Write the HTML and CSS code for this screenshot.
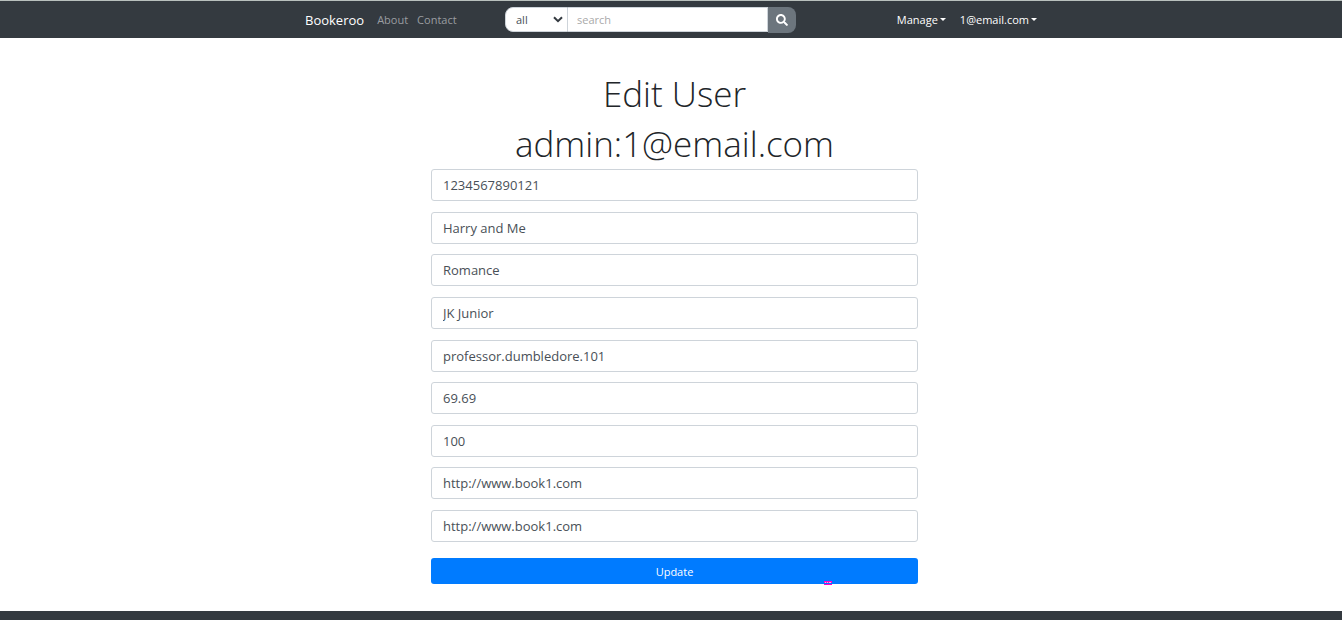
FILE: index.html
```html
<!DOCTYPE html>
<html lang="en">
<head>
<meta charset="utf-8">
<title>Bookeroo</title>
<link rel="stylesheet" href="styles.css">
</head>
<body>
<nav class="navbar">
  <div class="navbar-inner">
    <div class="nav-left">
      <a class="brand" href="#">Bookeroo</a>
      <a class="nav-link" href="#">About</a>
      <a class="nav-link" href="#">Contact</a>
    </div>
    <form class="search">
      <div class="select-wrap">
        <select class="search-type" aria-label="Search by"><option>all</option></select>
        <svg class="chevron" viewBox="0 0 10 7" aria-hidden="true"><path d="M1 1.200l4 4 4-4"/></svg>
      </div>
      <input class="search-text" type="text" placeholder="search" aria-label="Search">
      <button class="search-button" type="submit" aria-label="Search">
        <svg class="search-icon" viewBox="0 0 512 512" aria-hidden="true"><path d="M505 442.700L405.300 343c-4.500-4.500-10.600-7-17-7H372c27.600-35.300 44-79.700 44-128C416 93.100 322.900 0 208 0S0 93.100 0 208s93.100 208 208 208c48.300 0 92.700-16.400 128-44v16.300c0 6.400 2.500 12.500 7 17l99.700 99.700c9.400 9.400 24.600 9.400 33.900 0l28.300-28.300c9.400-9.400 9.400-24.600.1-34zM208 336c-70.700 0-128-57.200-128-128 0-70.700 57.200-128 128-128 70.700 0 128 57.200 128 128 0 70.700-57.200 128-128 128z"/></svg>
      </button>
    </form>
    <div class="nav-right">
      <a class="menu-link" href="#">Manage</a>
      <a class="menu-link" href="#">1@email.com</a>
    </div>
  </div>
</nav>
<main class="content">
  <h1 class="title">Edit User<br>admin:1@email.com</h1>
  <form class="edit-form">
    <div class="fields">
      <input class="field" type="text" aria-label="ISBN" value="1234567890121">
      <input class="field" type="text" aria-label="Title" value="Harry and Me">
      <input class="field" type="text" aria-label="Category" value="Romance">
      <input class="field" type="text" aria-label="Author" value="JK Junior">
      <input class="field" type="text" aria-label="Seller" value="professor.dumbledore.101">
      <input class="field" type="text" aria-label="Price" value="69.69">
      <input class="field" type="text" aria-label="Quantity" value="100">
      <input class="field" type="text" aria-label="Cover link" value="http://www.book1.com">
      <input class="field" type="text" aria-label="Contents link" value="http://www.book1.com">
    </div>
    <div class="submit-row">
      <button class="update" type="submit">Update</button>
      <svg class="mark" viewBox="0 0 8 4" aria-hidden="true"><path fill="#f0c" d="M0 0h8v4H0z"/><path fill="#fbd" d="M1 1h1v1H1zM3 1h1v1H3zM5 1h2v1H5z"/><path fill="#007bff" d="M0 2h8v1H0z"/></svg>
    </div>
  </form>
</main>
<footer class="footer"></footer>
</body>
</html>
```
FILE: styles.css
```css
* { box-sizing: border-box; }
body {
  margin: 0;
  min-height: 100vh;
  display: flex;
  flex-direction: column;
  background: #fff;
  color: #212529;
  font-family: "Open Sans", "Noto Sans", sans-serif;
  font-size: 11px;
}
input, select, button { margin: 0; font: inherit; }
.navbar {
  background: #343a40;
  border-top: 1px solid #b9c0bd;
}
.navbar-inner {
  display: grid;
  grid-template-columns: 200px 291px 1fr;
  align-items: center;
  max-width: 732px;
  height: 37px;
  margin: 0 auto;
}
.nav-left { display: flex; align-items: center; gap: 9px; }
.brand { margin-right: 4px; color: #fff; font-size: 13px; text-decoration: none; }
.nav-link { color: #9a9da0; text-decoration: none; }
.search { display: flex; align-items: flex-start; height: 26px; }
.select-wrap { position: relative; width: 63px; }
.search-type {
  appearance: none;
  display: block;
  width: 100%;
  height: 25px;
  padding: 0 10px;
  border: 1px solid #ced4da;
  border-radius: 8px 0 0 8px;
  background: #fff;
  color: #495057;
}
.chevron {
  position: absolute;
  top: 9px;
  right: 5px;
  width: 10px;
  height: 7px;
  fill: none;
  stroke: #343a40;
  stroke-width: 2;
}
.search-text {
  flex: 1;
  min-width: 0;
  height: 25px;
  padding: 0 9px;
  border: 1px solid #ced4da;
  border-left-width: 0;
  border-radius: 0;
}
.search-text::placeholder { color: #a9a9a9; opacity: 1; }
.search-button {
  display: grid;
  place-items: center;
  width: 28px;
  height: 26px;
  padding: 0;
  border: 0;
  border-radius: 0 8px 8px 0;
  background: #6c757d;
}
.search-icon { width: 12px; height: 12px; fill: #fff; }
.nav-right { display: flex; justify-content: flex-end; gap: 14px; }
.menu-link { display: flex; align-items: center; gap: 2px; color: #fff; text-decoration: none; }
.menu-link::after {
  content: "";
  border-top: 3px solid #fff;
  border-left: 3px solid transparent;
  border-right: 3px solid transparent;
}
.content {
  flex: 1;
  width: 100%;
  padding: 31px 0 27px 7px;
}
.title {
  margin: 0;
  font-size: 35px;
  font-weight: 300;
  line-height: 50px;
  text-align: center;
}
.edit-form { width: 487px; max-width: 100%; margin: 0 auto; }
.fields {
  display: grid;
  align-content: space-between;
  min-height: 373px;
}
.field {
  width: 100%;
  height: 32px;
  padding: 0 11px;
  border: 1px solid #ced4da;
  border-radius: 3px;
  background: #fff;
  color: #495057;
  font-size: 13px;
}
.submit-row { position: relative; margin-top: 16px; }
.update {
  display: block;
  width: 100%;
  height: 26px;
  padding: 0;
  border: 0;
  border-radius: 3px;
  background: #007bff;
  color: #fff;
}
.mark { position: absolute; right: 86px; bottom: -1px; width: 8px; height: 4px; }
.footer { height: 9px; background: #343a40; }
```
